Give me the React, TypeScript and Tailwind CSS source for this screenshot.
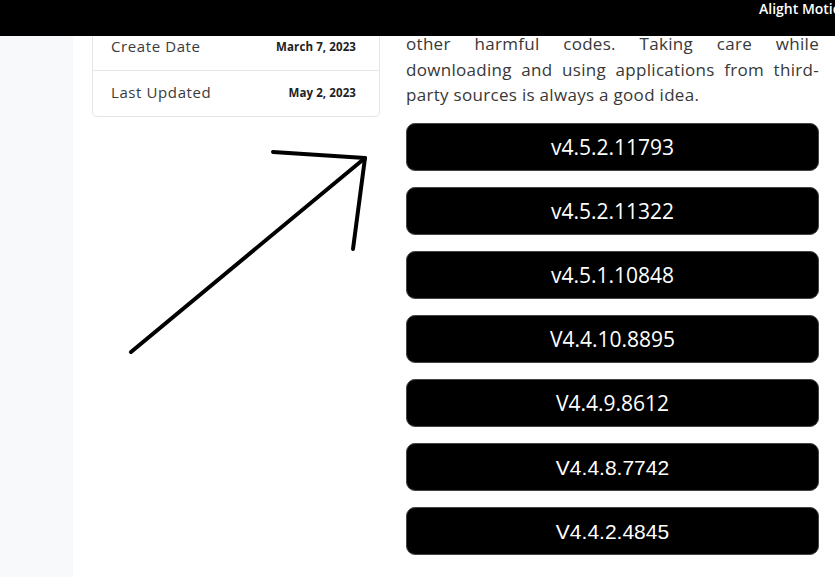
const sans = '"Open Sans", "Noto Sans", sans-serif';

const versions = [
  { label: 'v4.5.2.11793', arial: false },
  { label: 'v4.5.2.11322', arial: false },
  { label: 'v4.5.1.10848', arial: false },
  { label: 'V4.4.10.8895', arial: false },
  { label: 'V4.4.9.8612', arial: false },
  { label: 'V4.4.8.7742', arial: true },
  { label: 'V4.4.2.4845', arial: true },
];

function InfoRow({ label, value, last }: { label: string; value: string; last?: boolean }) {
  return (
    <div
      className={`flex items-center justify-between pl-[18px] pr-[23px] ${
        last ? 'h-[45px] pb-[2px]' : 'h-[48px] border-b border-[#e6e8eb]'
      }`}
    >
      <span className="text-[15px] tracking-[0.6px] text-[#3a3a3a]">{label}</span>
      <span className="text-[11.5px] tracking-[0.1px] font-bold text-[#222]">{value}</span>
    </div>
  );
}

export default function App() {
  return (
    <div className="relative w-[835px] h-[577px] overflow-hidden bg-white" style={{ fontFamily: sans }}>
      {/* sticky header over the page */}
      <div className="absolute top-0 left-0 right-0 z-10 h-[36px] bg-black overflow-hidden">
        <div className="pl-[759px] whitespace-nowrap text-[14px] leading-[17px] font-semibold text-white">
          Alight Motion
        </div>
      </div>

      <div className="flex h-full">
        <div className="w-[73px] h-full bg-[#f8f9fa] shrink-0" />

        <div className="ml-[19px] w-[288px] shrink-0">
          <div className="mt-[22px] border border-[#e3e5e8] rounded-[5px] bg-white">
            <InfoRow label="Create Date" value="March 7, 2023" />
            <InfoRow label="Last Updated" value="May 2, 2023" last />
          </div>
        </div>

        <div className="ml-[26px] w-[413px] shrink-0">
          <div className="mt-[31px] text-[17px] tracking-[0.3px] leading-[25.5px] text-[#383838]">
            <div className="text-justify [text-align-last:justify]">other harmful codes. Taking care while</div>
            <div className="text-justify [text-align-last:justify]">downloading and using applications from third-</div>
            <div>party sources is always a good idea.</div>
          </div>

          <div className="mt-[15px] flex flex-col gap-[16px]">
            {versions.map((v) => (
              <button
                key={v.label}
                className="h-[48px] w-full pt-[2px] rounded-[9px] bg-black border border-[#444] flex items-center justify-center text-white"
                style={
                  v.arial
                    ? { fontFamily: '"Liberation Sans", Arial, sans-serif', fontSize: 21 }
                    : { fontSize: 21 }
                }
              >
                {v.label}
              </button>
            ))}
          </div>
        </div>
      </div>

      {/* hand-drawn arrow */}
      <svg className="absolute inset-0 pointer-events-none" width="835" height="577">
        <g stroke="#000" strokeWidth="4" strokeLinecap="round" strokeLinejoin="round" fill="none">
          <line x1="131" y1="352" x2="365" y2="158" />
          <polyline points="273,152 365,158 353,249" />
        </g>
      </svg>
    </div>
  );
}
